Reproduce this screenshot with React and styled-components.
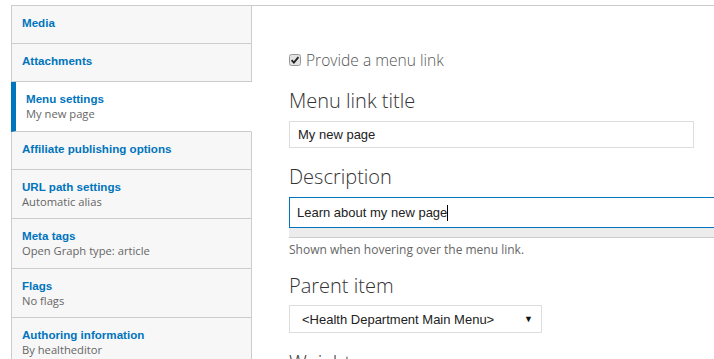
import React from "react";
import styled, { createGlobalStyle } from "styled-components";

const Global = createGlobalStyle`
  html, body {
    margin: 0;
    padding: 0;
    background: #fff;
    overflow: hidden;
  }
  * { box-sizing: border-box; }
`;

const Page = styled.div`
  padding: 5px 0 0 11px;
  width: 900px;
`;

const Layout = styled.div`
  display: flex;
  align-items: flex-start;
  border-top: 1px solid #ccc;
`;

const Sidebar = styled.div`
  width: 241px;
  flex-shrink: 0;
  display: flex;
  flex-direction: column;
`;

const Tab = styled.div`
  background: ${(p) => (p.$active ? "#fff" : "#f7f7f7")};
  border-left: ${(p) => (p.$active ? "5px solid #0074bd" : "1px solid #ccc")};
  border-right: 1px solid ${(p) => (p.$active ? "#fff" : "#ccc")};
  border-bottom: 1px solid #ccc;
  padding: 10px 10px ${(p) => (p.$hasSummary ? "9.5px" : "13px")};
  display: flex;
  flex-direction: column;
`;

const TabTitle = styled.div`
  font-family: "Liberation Sans", Arial, sans-serif;
  font-weight: bold;
  font-size: 11.6px;
  line-height: 14px;
  color: #0074bd;
  white-space: nowrap;
`;

const TabSummary = styled.div`
  font-family: "Open Sans", sans-serif;
  font-size: 11.2px;
  line-height: 15px;
  color: #666;
  white-space: nowrap;
`;

const Main = styled.div`
  flex: 1;
  padding: 44px 0 0 37px;
  display: flex;
  flex-direction: column;
  align-items: flex-start;
`;

const CheckRow = styled.label`
  display: flex;
  align-items: center;
  gap: 5px;
  font-family: "Open Sans", sans-serif;
  font-weight: 300;
  font-size: 15.6px;
  line-height: 20px;
  color: #555;
`;

const Heading = styled.div`
  font-family: "Open Sans", sans-serif;
  font-weight: 300;
  font-size: 20px;
  line-height: 24px;
  color: #333;
  margin-top: ${(p) => p.$mt}px;
  margin-bottom: ${(p) => p.$mb ?? 8}px;
`;

const TextInput = styled.div`
  width: 405px;
  height: 27px;
  border: 1px solid #ddd;
  padding: 0 8px;
  display: flex;
  align-items: center;
  font-family: "Liberation Sans", Arial, sans-serif;
  font-size: 13px;
  color: #222;
`;

const TextAreaWrap = styled.div`
  width: 520px;
  display: flex;
  flex-direction: column;
`;

const TextArea = styled.div`
  height: 31px;
  border: 1px solid #0074bd;
  padding: 0 7px;
  display: flex;
  align-items: center;
  font-family: "Liberation Sans", Arial, sans-serif;
  font-size: 13px;
  color: #222;
`;

const Caret = styled.span`
  display: inline-block;
  width: 1px;
  height: 16px;
  background: #000;
`;

const Grippie = styled.div`
  height: 10px;
  background: #ececec;
  border-bottom: 1px solid #ccc;
`;

const Help = styled.div`
  font-family: "Open Sans", sans-serif;
  font-size: 12px;
  line-height: 18px;
  color: #666;
  margin-top: 3px;
`;

const Select = styled.div`
  width: 253px;
  height: 28px;
  border: 1px solid #ddd;
  padding: 0 8px 0 12px;
  display: flex;
  align-items: center;
  justify-content: space-between;
  font-family: "Liberation Sans", Arial, sans-serif;
  font-size: 13px;
  color: #222;
`;

const Arrow = styled.span`
  font-size: 9px;
  color: #111;
`;

const tabs = [
  { title: "Media" },
  { title: "Attachments" },
  { title: "Menu settings", summary: "My new page", active: true },
  { title: "Affiliate publishing options" },
  { title: "URL path settings", summary: "Automatic alias" },
  { title: "Meta tags", summary: "Open Graph type: article" },
  { title: "Flags", summary: "No flags" },
  { title: "Authoring information", summary: "By healtheditor" },
];

const CheckIcon = () => (
  <svg width="12" height="12" viewBox="0 0 12 12">
    <rect x="0.5" y="0.5" width="11" height="11" rx="2" fill="#e3e3e3" stroke="#999" />
    <path d="M2.6 6.2 L4.9 8.6 L9.4 3.2" fill="none" stroke="#222" strokeWidth="1.8" />
  </svg>
);

export default function App() {
  return (
    <Page>
      <Global />
      <Layout>
        <Sidebar>
          {tabs.map((t) => (
            <Tab key={t.title} $active={t.active} $hasSummary={!!t.summary}>
              <TabTitle>{t.title}</TabTitle>
              {t.summary && <TabSummary>{t.summary}</TabSummary>}
            </Tab>
          ))}
        </Sidebar>
        <Main>
          <CheckRow>
            <CheckIcon />
            Provide a menu link
          </CheckRow>
          <Heading $mt={19}>Menu link title</Heading>
          <TextInput>My new page</TextInput>
          <Heading $mt={17}>Description</Heading>
          <TextAreaWrap>
            <TextArea>
              Learn about my new page
              <Caret />
            </TextArea>
            <Grippie />
          </TextAreaWrap>
          <Help>Shown when hovering over the menu link.</Help>
          <Heading $mt={15} $mb={7}>Parent item</Heading>
          <Select>
            <span>&lt;Health Department Main Menu&gt;</span>
            <Arrow>▼</Arrow>
          </Select>
          <Heading $mt={18}>Weight</Heading>
        </Main>
      </Layout>
    </Page>
  );
}
